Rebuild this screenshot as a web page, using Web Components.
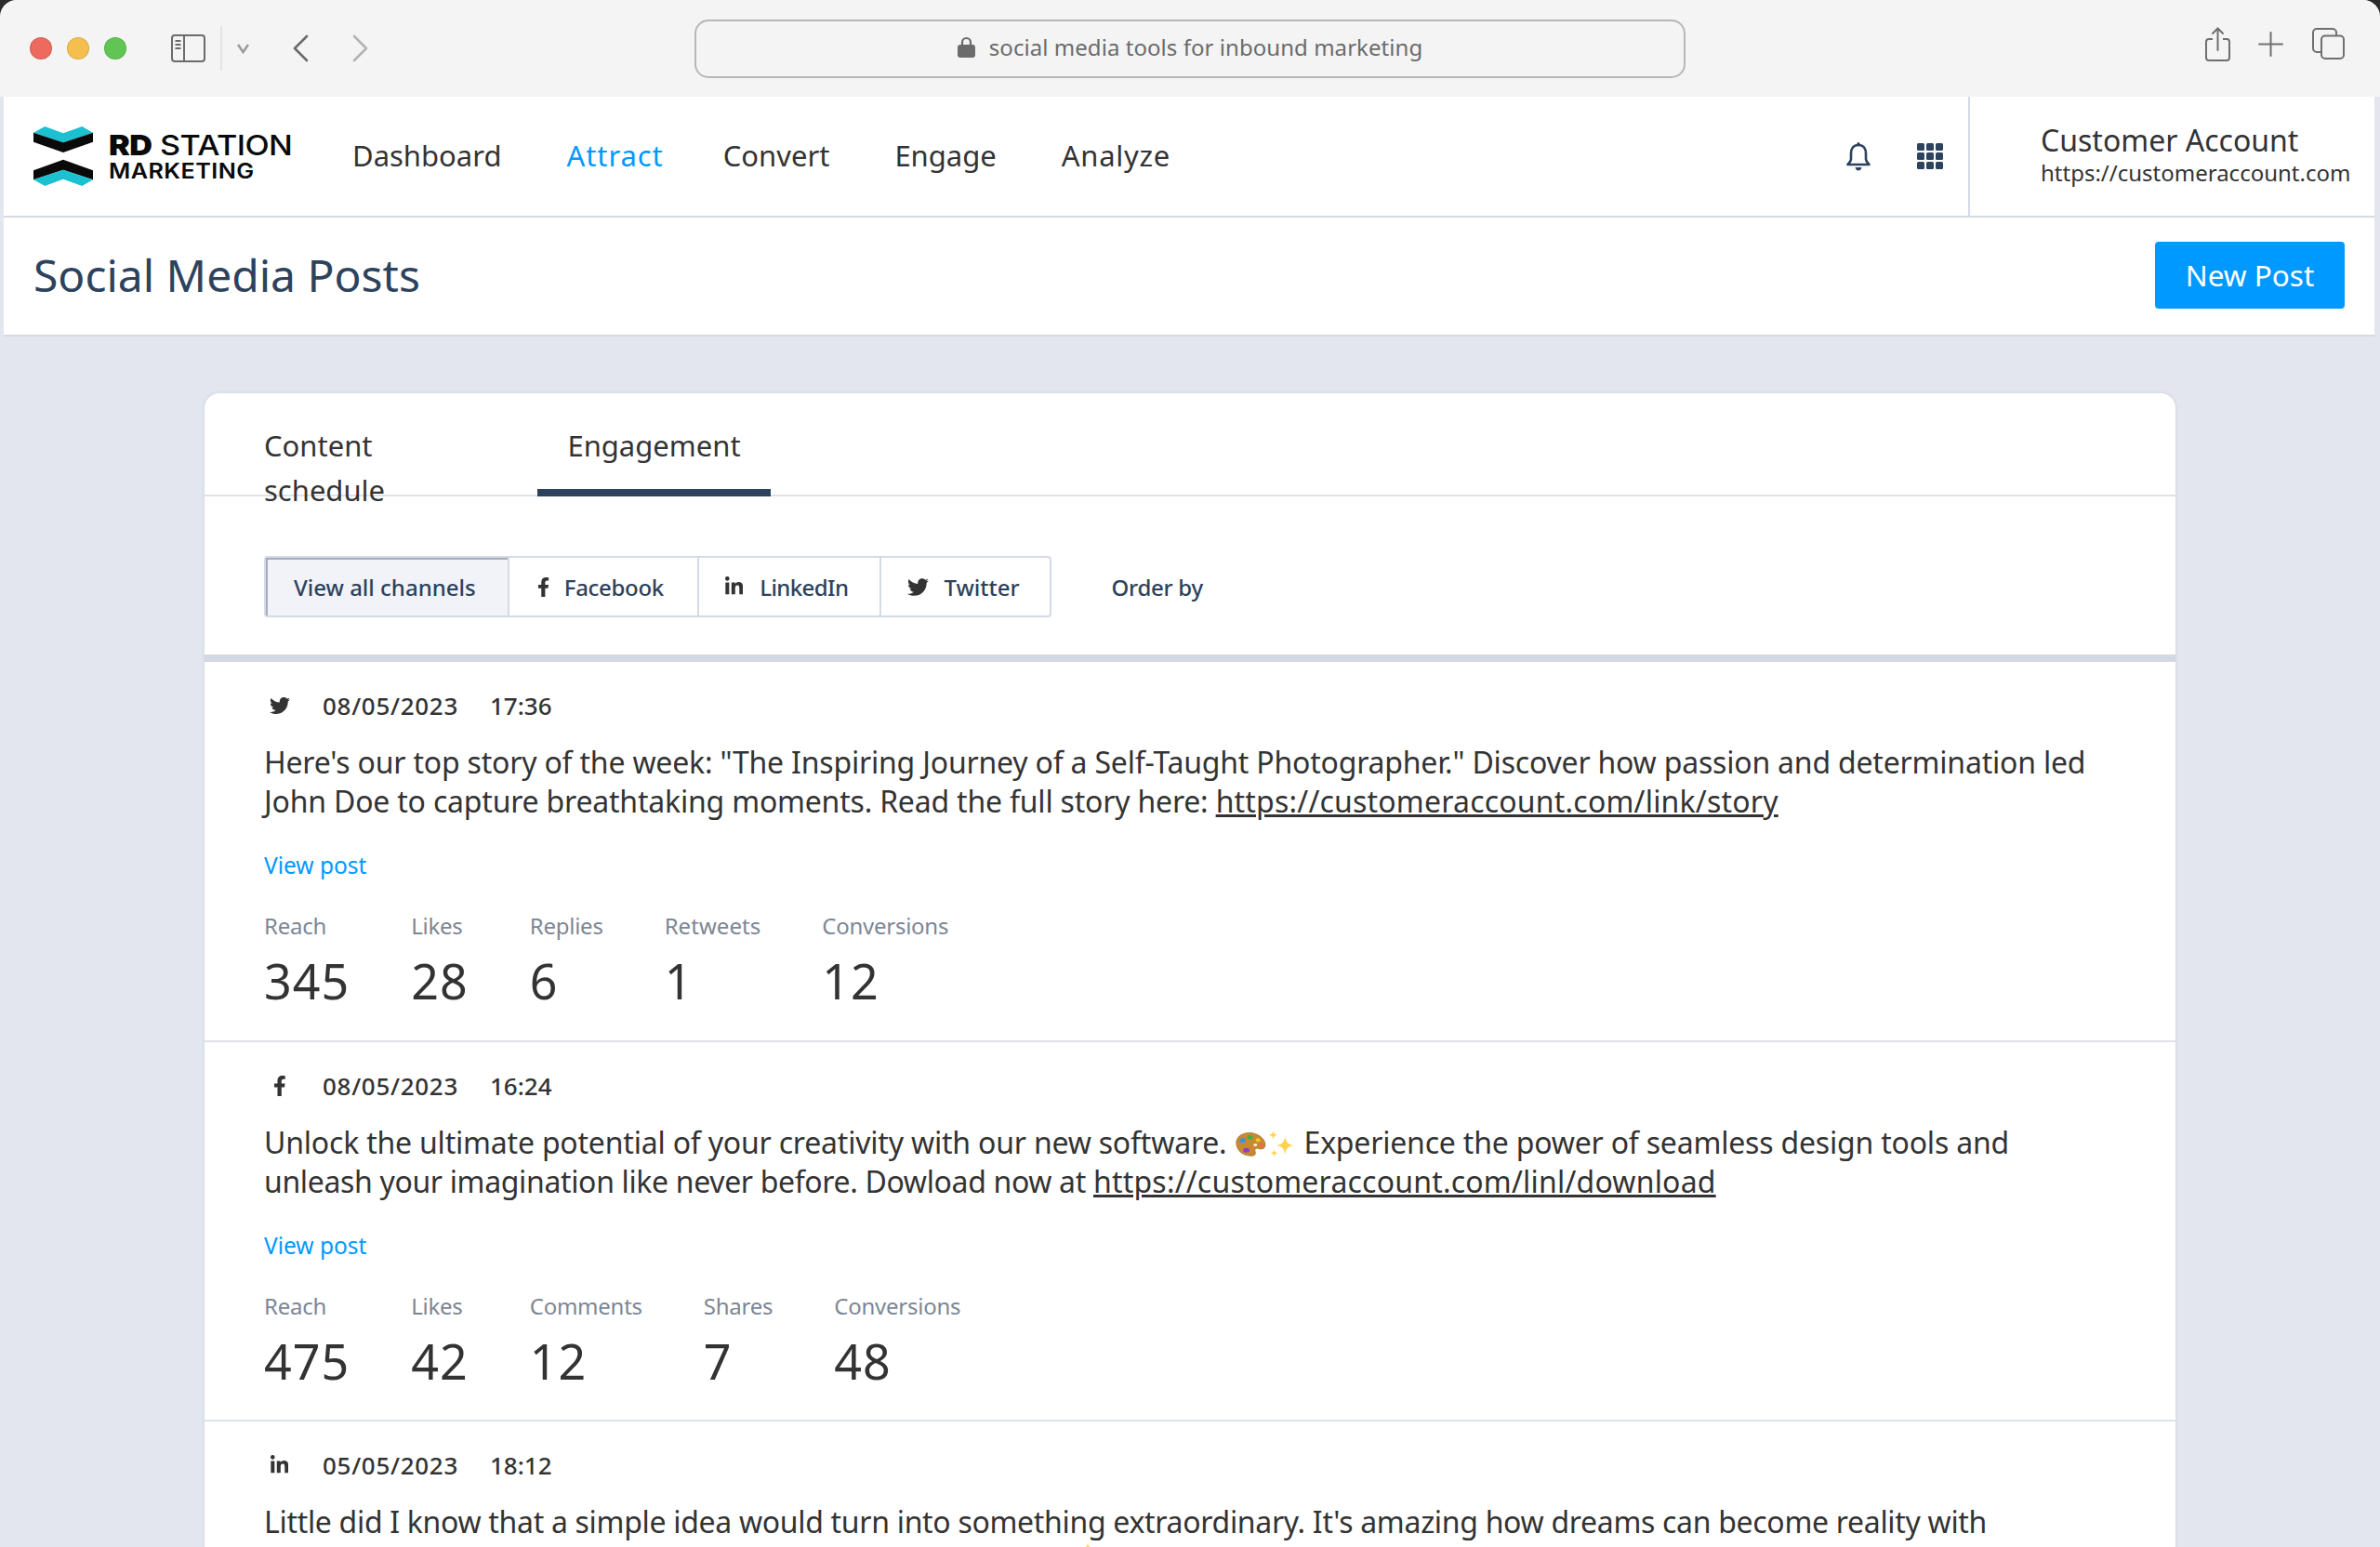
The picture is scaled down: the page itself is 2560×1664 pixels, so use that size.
<!DOCTYPE html>
<html lang="en">
<head>
<meta charset="utf-8">
<title>Social Media Posts</title>
<style>
    html{ background: #2b2b2b; }
    body{
        margin: 0;
        height: 1664px;
        overflow: hidden;
        background: #e3e6ef;
        border-radius: 18px 18px 0 0;
        font-family: "Noto Sans", "Liberation Sans", sans-serif;
        color: #333;
    }
</style>
</head>
<body>
<browser-bar title-text="social media tools for inbound marketing"></browser-bar>
<app-frame>
    <app-header></app-header>
    <page-title heading="Social Media Posts" action="New Post"></page-title>
    <main-card>
        <tab-bar></tab-bar>
        <channel-filter></channel-filter>

        <post-item network="twitter" date="08/05/2023" time="17:36">
            Here's our top story of the week: "The Inspiring Journey of a Self-Taught Photographer." Discover how passion and determination led John Doe to capture breathtaking moments. Read the full story here: <a>https://customeraccount.com/link/story</a>
            <post-stat slot="stats" label="Reach" value="345"></post-stat>
            <post-stat slot="stats" label="Likes" value="28"></post-stat>
            <post-stat slot="stats" label="Replies" value="6"></post-stat>
            <post-stat slot="stats" label="Retweets" value="1" style="--label-tracking:.05px"></post-stat>
            <post-stat slot="stats" label="Conversions" value="12"></post-stat>
        </post-item>

        <post-item network="facebook" date="08/05/2023" time="16:24">
            Unlock the ultimate potential of your creativity with our new software. <ui-icon name="palette" size="29" style="vertical-align:-5px"></ui-icon><ui-icon name="sparkles" size="32" style="vertical-align:-6px"></ui-icon> Experience the power of seamless design tools and <span style="letter-spacing:-.35px">unleash your imagination like never before. Dowload now at</span> <a>https://customeraccount.com/linl/download</a>
            <post-stat slot="stats" label="Reach" value="475"></post-stat>
            <post-stat slot="stats" label="Likes" value="42"></post-stat>
            <post-stat slot="stats" label="Comments" value="12"></post-stat>
            <post-stat slot="stats" label="Shares" value="7"></post-stat>
            <post-stat slot="stats" label="Conversions" value="48"></post-stat>
        </post-item>

        <post-item network="linkedin" date="05/05/2023" time="18:12" style="--tracking:-.31px">
            Little did I know that a simple idea would turn into something extraordinary. It's amazing how dreams can become reality with
            <br><ui-icon name="sparkles" size="30" style="margin:-8px 0 0 879px;vertical-align:2px"></ui-icon>
        </post-item>
    </main-card>
</app-frame>

<script>
const ICONS = {
    twitter: ['0 0 512 512', '<path fill="currentColor" d="M459.37 151.716c.325 4.548.325 9.097.325 13.645 0 138.72-105.583 298.558-298.558 298.558-59.452 0-114.68-17.219-161.137-47.106 8.447.974 16.568 1.299 25.34 1.299 49.055 0 94.213-16.568 130.274-44.832-46.132-.975-84.792-31.188-98.112-72.772 6.498.974 12.995 1.624 19.818 1.624 9.421 0 18.843-1.3 27.614-3.573-48.081-9.747-84.143-51.98-84.143-102.985v-1.299c13.969 7.797 30.214 12.67 47.431 13.319-28.264-18.843-46.781-51.005-46.781-87.391 0-19.492 5.197-37.36 14.294-52.954 51.655 63.675 129.3 105.258 216.365 109.807-1.624-7.797-2.599-15.918-2.599-24.04 0-57.828 46.782-104.934 104.934-104.934 30.213 0 57.502 12.67 76.67 33.137 23.715-4.548 46.456-13.32 66.599-25.34-7.798 24.366-24.366 44.833-46.132 57.827 21.117-2.273 41.584-8.122 60.426-16.243-14.292 20.791-32.161 39.308-52.628 54.253z"/>'],
    facebook: ['0 0 320 512', '<path fill="currentColor" d="M279.14 288l14.22-92.66h-88.91v-60.13c0-25.35 12.42-50.06 52.24-50.06h40.42V6.26S260.43 0 225.36 0c-73.22 0-121.08 44.38-121.08 124.72v70.62H22.89V288h81.39v224h100.17V288z"/>'],
    linkedin: ['0 0 448 512', '<path fill="currentColor" d="M100.28 448H7.4V148.9h92.88zM53.79 108.1C24.09 108.1 0 83.5 0 53.8a53.79 53.79 0 0 1 107.58 0c0 29.7-24.1 54.3-53.79 54.3zM447.9 448h-92.68V302.4c0-34.7-.7-79.2-48.29-79.2-48.29 0-55.69 37.7-55.69 76.7V448h-92.78V148.9h89.08v40.8h1.3c12.4-23.5 42.69-48.3 87.88-48.3 94 0 111.28 61.9 111.28 142.3V448z"/>'],
    palette: ['0 0 36 30', '<path fill="#c98a2e" stroke="#8f5a17" stroke-width=".6" d="M2 11C3 4 12 0 21 2c8 2 14 8 13 14-.6 4-5 4-8 3-3-.8-4 1-3 4 1 3-2 5-7 4C7 26 1 19 2 11z"/><ellipse cx="9" cy="10" rx="3.4" ry="2.6" fill="#3f8fe8"/><ellipse cx="17" cy="6.5" rx="3.2" ry="2.4" fill="#3fb34a"/><ellipse cx="26" cy="9.5" rx="2.6" ry="2.1" fill="#f1c42c"/><ellipse cx="30" cy="15.5" rx="2.4" ry="2.6" fill="#ef6a4c"/><ellipse cx="13" cy="21" rx="3.6" ry="2.6" fill="#8a3fd0"/><ellipse cx="23" cy="15" rx="2" ry="1.4" fill="#fff"/>'],
    sparkles: ['0 0 30 30', '<path fill="#fcd34d" d="M19 7c1 6 3 8 9 9-6 1-8 3-9 9-1-6-3-8-9-9 6-1 8-3 9-9zM7 1c.5 3 1.500 4 4.500 4.500C8.500 6 7.500 7 7 10 6.500 7 5.500 6 2.500 5.500 5.500 5 6.500 4 7 1zM8 20c.4 2.500 1.200 3.300 3.700 3.700C9.200 24.100 8.400 24.900 8 27.500c-.4-2.600-1.200-3.400-3.700-3.800C6.800 23.300 7.600 22.500 8 20z"/>']
}

class UiIcon extends HTMLElement{
    connectedCallback(){
        const [box, body] = ICONS[this.getAttribute('name')]
        const size = +this.getAttribute('size') || 24
        const [,,w,h] = box.split(' ').map(Number)
        this.attachShadow({mode:"open"}).innerHTML = `
        <style>
            :host{ display: inline-block; line-height: 0; }
            svg{ display: block; }
        </style>
        <svg width="${size * w / h}" height="${size}" viewBox="${box}" xmlns="http://www.w3.org/2000/svg">${body}</svg>
        `
    }
}
customElements.define('ui-icon',UiIcon)

class BrowserBar extends HTMLElement{
    connectedCallback(){
        this.attachShadow({mode:"open"}).innerHTML = `
        <style>
            :host{
                display: flex;
                align-items: center;
                height: 104px;
                box-sizing: border-box;
                background: #f4f4f4;
                border-radius: 18px 18px 0 0;
                position: relative;
            }
            .lights{ display: flex; gap: 16px; margin-left: 32px; }
            .lights i{ width: 24px; height: 24px; border-radius: 50%; box-sizing: border-box; border: 1px solid rgba(0,0,0,.1); }
            .tools{ display: flex; align-items: center; margin-left: 48px; width: 563px; flex: none; }
            svg{ display: block; flex: none; }
            .sep{ width: 2px; height: 48px; background: #e4e4e4; margin: 0 16px 0 16px; }
            .url{
                flex: none;
                width: 1066px;
                height: 63px;
                box-sizing: border-box;
                padding-bottom: 3px;
                border: 2px solid #b7b7b7;
                border-radius: 15px;
                display: flex;
                align-items: center;
                justify-content: center;
                gap: 15px;
                font-size: 24px;
                letter-spacing: .05px;
                color: #6b6b6b;
            }
            .right{ display: flex; align-items: center; margin-left: auto; margin-right: 38px; position: relative; top: -5px; }
        </style>
        <div class="lights">
            <i style="background:#ec6a5e"></i><i style="background:#f4bf4f"></i><i style="background:#61c554"></i>
        </div>
        <div class="tools">
            <svg width="37" height="30" viewBox="0 0 37 30" fill="none" stroke="#6b6b6b" stroke-width="2"><rect x="1" y="1" width="35" height="28" rx="3"/><path d="M14 1v28"/><path d="M4.500 7h6M4.500 11h6M4.500 15h6" stroke-width="2"/></svg>
            <div class="sep"></div>
            <svg width="13" height="12" viewBox="0 0 13 12" fill="none" stroke="#9a9a9a" stroke-width="2.500"><path d="M1 2l5.500 8L12 2"/></svg>
            <svg style="margin-left:47px" width="17" height="30" viewBox="0 0 17 30" fill="none" stroke="#6b6b6b" stroke-width="2.600" stroke-linecap="round" stroke-linejoin="round"><path d="M15 2L2 15l13 13"/></svg>
            <svg style="margin-left:47px" width="17" height="30" viewBox="0 0 17 30" fill="none" stroke="#b3b3b3" stroke-width="2.600" stroke-linecap="round" stroke-linejoin="round"><path d="M2 2l13 13L2 28"/></svg>
        </div>
        <div class="url">
            <svg width="19" height="23" viewBox="0 0 19 23"><path fill="none" stroke="#6b6b6b" stroke-width="2.200" d="M5 10V6.500a4.500 4.500 0 0 1 9 0V10"/><rect x="0" y="9" width="19" height="14" rx="3" fill="#6b6b6b"/></svg>
            <span>${this.getAttribute('title-text')}</span>
        </div>
        <div class="right">
            <svg width="27" height="37" viewBox="0 0 27 37" fill="none" stroke="#6f6f6f" stroke-width="2"><path d="M8 13H4a3 3 0 0 0-3 3v17a3 3 0 0 0 3 3h19a3 3 0 0 0 3-3V16a3 3 0 0 0-3-3h-4"/><path d="M13.500 25V2M8 7l5.500-5.500L19 7" stroke-linecap="round"/></svg>
            <svg style="margin-left:30px" width="27" height="27" viewBox="0 0 27 27" stroke="#6f6f6f" stroke-width="2" stroke-linecap="round"><path d="M13.500 1v25M1 13.500h25"/></svg>
            <svg style="margin-left:31px" width="35" height="34" viewBox="0 0 35 34" fill="none" stroke="#6f6f6f" stroke-width="2"><path d="M9 26H5a4 4 0 0 1-4-4V5a4 4 0 0 1 4-4h17a4 4 0 0 1 4 4v3"/><rect x="10" y="8.500" width="24" height="24.500" rx="4"/></svg>
        </div>
        `
    }
}
customElements.define('browser-bar',BrowserBar)

class AppFrame extends HTMLElement{
    constructor(){
        super()
        this.attachShadow({mode:"open"}).innerHTML = `
        <style>
            :host{ display: block; margin: 0 6px 0 4px; }
        </style>
        <slot></slot>
        `
    }
}
customElements.define('app-frame',AppFrame)

class AppHeader extends HTMLElement{
    connectedCallback(){
        const links = ['Dashboard','Attract','Convert','Engage','Analyze']
        this.attachShadow({mode:"open"}).innerHTML = `
        <style>
            :host{
                display: flex;
                align-items: stretch;
                height: 130px;
                box-sizing: border-box;
                background: #fff;
                border-bottom: 2px solid #d6d9e6;
            }
            .logo{ display: flex; align-items: center; margin-left: 32px; width: 343px; flex: none; }
            .word{ margin-left: 17px; color: #0a0a0a; font-family: Inter, "Liberation Sans", sans-serif; line-height: 1; transform: scaleX(1.12); transform-origin: left center; }
            .word div:first-child{ font-size: 30.5px; font-weight: 500; letter-spacing: -.5px; margin-bottom: 2px; }
            .word b{ font-weight: 900; }
            .word div:last-child{ font-size: 22.500px; font-weight: 600; letter-spacing: .4px; }
            nav{ display: flex; align-items: center; gap: 70px; font-size: 31px; color: #333; padding-bottom: 2px; }
            nav a.on{ color: #0099ff; letter-spacing: .9px; margin-right: -6px; }
            nav a:last-child{ letter-spacing: .7px; }
            .icons{ display: flex; align-items: center; margin-left: auto; color: #2d425c; }
            .bell{ margin-right: 50px; }
            .account{
                margin-left: 27px;
                width: 437px;
                box-sizing: border-box;
                padding: 0 0 5px 76px;
                border-left: 2px solid #d6d9e6;
                display: flex;
                flex-direction: column;
                justify-content: center;
                color: #333;
            }
            .account div:first-child{ font-size: 32px; line-height: 40px; }
            .account div:last-child{ font-size: 24px; line-height: 30px; }
        </style>
        <div class="logo">
            <svg width="64" height="64" viewBox="0 0 64 64">
                <path fill="#1bc1d0" d="M0 6.700L12.300 0 32 7.300 52.300 0 64 6.700 32 17.300z"/>
                <path fill="#0a0a0a" d="M0 6.700L32 17.300 64 6.700V16.700L32 28 0 16.700z"/>
                <path fill="#0a0a0a" d="M32 35.700L64 47.300V57.300L32 46.700 0 57.300V47.300z"/>
                <path fill="#1bc1d0" d="M0 57.300L32 46.700 64 57.300 52.300 64 32 56.700 12.300 64z"/>
            </svg>
            <div class="word"><div><b>RD</b> STATION</div><div>MARKETING</div></div>
        </div>
        <nav>${links.map(l => `<a class="${l === 'Attract' ? 'on' : ''}">${l}</a>`).join('')}</nav>
        <div class="icons">
            <svg class="bell" width="26" height="32" viewBox="0 0 26 32" fill="none" stroke="currentColor" stroke-width="2.600"><path d="M13 4C7.500 4 5 8 5 13v6c0 2.500-1.500 4-3.500 6h23C22.500 23 21 21.500 21 19v-6c0-5-2.500-9-8-9z" stroke-linejoin="round"/><circle cx="13" cy="2.500" r="1.500" fill="currentColor" stroke="none"/><path d="M9.500 28h7c-.5 2.500-2 3.500-3.500 3.500S10 30.500 9.500 28z" fill="currentColor" stroke="none"/></svg>
            <svg width="28" height="28" viewBox="0 0 28 28" fill="currentColor"><rect width="8" height="8" rx="1.500"/><rect x="10" width="8" height="8" rx="1.500"/><rect x="20" width="8" height="8" rx="1.500"/><rect y="10" width="8" height="8" rx="1.500"/><rect x="10" y="10" width="8" height="8" rx="1.500"/><rect x="20" y="10" width="8" height="8" rx="1.500"/><rect y="20" width="8" height="8" rx="1.500"/><rect x="10" y="20" width="8" height="8" rx="1.500"/><rect x="20" y="20" width="8" height="8" rx="1.500"/></svg>
        </div>
        <div class="account">
            <div>Customer Account</div>
            <div>https://customeraccount.com</div>
        </div>
        `
    }
}
customElements.define('app-header',AppHeader)

class PageTitle extends HTMLElement{
    connectedCallback(){
        this.attachShadow({mode:"open"}).innerHTML = `
        <style>
            :host{
                display: flex;
                align-items: center;
                justify-content: space-between;
                height: 128px;
                box-sizing: border-box;
                padding: 0 32px 2px;
                background: #fff;
                border-bottom: 2px solid #d6d9e6;
            }
            h1{ margin: 0 0 2px; font-size: 48px; font-weight: 400; color: #2d425c; }
            button{
                width: 204px;
                height: 72px;
                border: 0;
                border-radius: 4px;
                padding: 0 0 2px;
                background: #0099ff;
                color: #fff;
                font: inherit;
                font-size: 31.5px;
            }
        </style>
        <h1>${this.getAttribute('heading')}</h1>
        <button>${this.getAttribute('action')}</button>
        `
    }
}
customElements.define('page-title',PageTitle)

class MainCard extends HTMLElement{
    constructor(){
        super()
        this.attachShadow({mode:"open"}).innerHTML = `
        <style>
            :host{
                display: block;
                margin: 61px 214px 0 216px;
                background: #fff;
                border-radius: 16px 16px 0 0;
                box-shadow: 0 0 4px rgba(45,66,92,.12);
            }
        </style>
        <slot></slot>
        `
    }
}
customElements.define('main-card',MainCard)

class TabBar extends HTMLElement{
    connectedCallback(){
        this.attachShadow({mode:"open"}).innerHTML = `
        <style>
            :host{
                display: flex;
                height: 111px;
                box-sizing: border-box;
                padding-left: 32px;
                border-bottom: 2px solid #dfe2e9;
                font-size: 31px;
                line-height: 48px;
                color: #333;
            }
            div{ box-sizing: border-box; padding: 32px 32px 0; height: 111px; }
            .first{ width: 326px; padding-right: 120px; }
            .on{ width: 251px; text-align: center; padding-left: 0; padding-right: 0; border-bottom: 8px solid #2d425c; }
        </style>
        <div class="first">Content schedule</div>
        <div class="on">Engagement</div>
        `
    }
}
customElements.define('tab-bar',TabBar)

class ChannelFilter extends HTMLElement{
    connectedCallback(){
        this.attachShadow({mode:"open"}).innerHTML = `
        <style>
            :host{
                display: flex;
                align-items: center;
                padding: 64px 64px 40px;
                border-bottom: 8px solid #d3d8e3;
                font-size: 24px;
                font-weight: 500;
                color: #2d425c;
            }
            .group{
                display: flex;
                height: 66px;
                box-sizing: border-box;
                border: 2px solid #d6d9e6;
                border-radius: 4px;
            }
            .group span{
                display: flex;
                align-items: center;
                padding: 0 32px;
                border-left: 2px solid #d6d9e6;
            }
            .group span:first-child{
                border-left: 0;
                background: #f1f3f8;
                box-shadow: inset 2px 2px 0 #a5adba;
                padding: 0 34px 0 30px;
            }
            .group span.fb{ padding: 0 36px 0 30px; gap: 16px; letter-spacing: -.3px; }
            .group span.in{ padding: 0 34px 0 28px; gap: 18px; letter-spacing: -.6px; }
            .group span.bird{ padding: 0 32px 0 28px; gap: 16px; }
            .order{ margin-left: 65px; letter-spacing: -.3px; }
            ui-icon{ color: #333; }
        </style>
        <div class="group">
            <span>View all channels</span>
            <span class="fb"><ui-icon name="facebook" size="21"></ui-icon>Facebook</span>
            <span class="in"><ui-icon name="linkedin" size="22"></ui-icon>LinkedIn</span>
            <span class="bird"><ui-icon name="twitter" size="23"></ui-icon>Twitter</span>
        </div>
        <div class="order">Order by</div>
        `
    }
}
customElements.define('channel-filter',ChannelFilter)

class PostItem extends HTMLElement{
    connectedCallback(){
        this.attachShadow({mode:"open"}).innerHTML = `
        <style>
            :host{
                display: block;
                box-sizing: border-box;
                height: 408.5px;
                padding: 29px 64px 0;
                border-bottom: 2px solid #dfe2e9;
                color: #333;
            }
            .meta{ display: flex; align-items: center; font-size: 26px; line-height: 36px; font-weight: 500; }
            .meta .slot{ width: 27px; margin: 0 33px 0 3px; display: flex; justify-content: center; }
            .meta .date{ margin-right: 34px; letter-spacing: .7px; }
            .body{ margin-top: 22px; max-width: 1968px; font-size: 32px; line-height: 42px; letter-spacing: var(--tracking, -.2px); }
            ::slotted(a){ text-decoration: underline; letter-spacing: .2px; }
            .view{ margin-top: 30px; font-size: 24.5px; line-height: 36px; color: #0099ff; }
            .stats{ display: flex; gap: 66px; margin-top: 29px; }
        </style>
        <div class="meta">
            <div class="slot"><ui-icon name="${this.getAttribute('network')}" size="22"></ui-icon></div>
            <span class="date">${this.getAttribute('date')}</span>
            <span>${this.getAttribute('time')}</span>
        </div>
        <div class="body"><slot></slot></div>
        <div class="view">View post</div>
        <div class="stats"><slot name="stats"></slot></div>
        `
    }
}
customElements.define('post-item',PostItem)

class PostStat extends HTMLElement{
    connectedCallback(){
        this.attachShadow({mode:"open"}).innerHTML = `
        <style>
            :host{ display: block; }
            .label{ font-size: 24px; line-height: 36px; color: #7d8694; letter-spacing: var(--label-tracking, -.25px); }
            .value{ margin-top: 9px; font-size: 52px; line-height: 64px; color: #333; letter-spacing: 1px; }
        </style>
        <div class="label">${this.getAttribute('label')}</div>
        <div class="value">${this.getAttribute('value')}</div>
        `
    }
}
customElements.define('post-stat',PostStat)
</script>
</body>
</html>
